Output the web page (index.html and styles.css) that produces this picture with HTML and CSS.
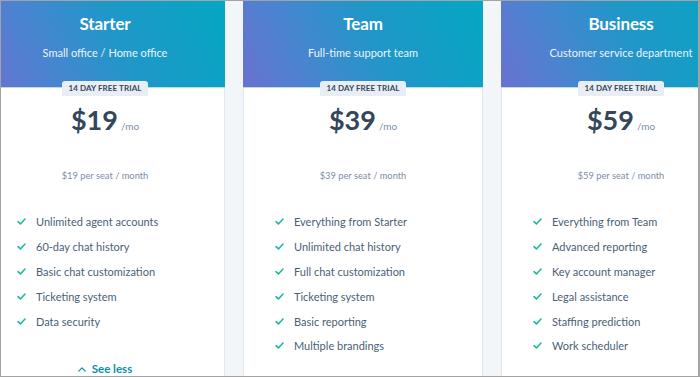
FILE: index.html
```html
<!DOCTYPE html>
<html lang="en">
<head>
<meta charset="utf-8">
<title>Pricing</title>
<link rel="stylesheet" href="styles.css">
</head>
<body>
<div class="frame">
  <div class="plans">
    <section class="plan">
      <header class="plan-head">
        <h2 class="plan-name">Starter</h2>
        <p class="plan-desc">Small office / Home office</p>
      </header>
      <div class="plan-body">
        <span class="badge">14 DAY FREE TRIAL</span>
        <div class="price"><span class="amount">$19</span><span class="per">/mo</span></div>
        <p class="seat">$19 per seat / month</p>
        <ul class="features">
          <li><svg class="check" viewBox="0 0 10 8"><polyline points="1,4.2 3.8,6.8 9,1.2"/></svg>Unlimited agent accounts</li>
          <li><svg class="check" viewBox="0 0 10 8"><polyline points="1,4.2 3.8,6.8 9,1.2"/></svg>60-day chat history</li>
          <li><svg class="check" viewBox="0 0 10 8"><polyline points="1,4.2 3.8,6.8 9,1.2"/></svg>Basic chat customization</li>
          <li><svg class="check" viewBox="0 0 10 8"><polyline points="1,4.2 3.8,6.8 9,1.2"/></svg>Ticketing system</li>
          <li><svg class="check" viewBox="0 0 10 8"><polyline points="1,4.2 3.8,6.8 9,1.2"/></svg>Data security</li>
        </ul>
        <a class="toggle" href="#"><svg class="caret" viewBox="0 0 10 6"><polyline points="1,5 5,1 9,5"/></svg>See less</a>
      </div>
    </section>
    <section class="plan">
      <header class="plan-head">
        <h2 class="plan-name">Team</h2>
        <p class="plan-desc">Full-time support team</p>
      </header>
      <div class="plan-body">
        <span class="badge">14 DAY FREE TRIAL</span>
        <div class="price"><span class="amount">$39</span><span class="per">/mo</span></div>
        <p class="seat">$39 per seat / month</p>
        <ul class="features">
          <li><svg class="check" viewBox="0 0 10 8"><polyline points="1,4.2 3.8,6.8 9,1.2"/></svg>Everything from Starter</li>
          <li><svg class="check" viewBox="0 0 10 8"><polyline points="1,4.2 3.8,6.8 9,1.2"/></svg>Unlimited chat history</li>
          <li><svg class="check" viewBox="0 0 10 8"><polyline points="1,4.2 3.8,6.8 9,1.2"/></svg>Full chat customization</li>
          <li><svg class="check" viewBox="0 0 10 8"><polyline points="1,4.2 3.8,6.8 9,1.2"/></svg>Ticketing system</li>
          <li><svg class="check" viewBox="0 0 10 8"><polyline points="1,4.2 3.8,6.8 9,1.2"/></svg>Basic reporting</li>
          <li><svg class="check" viewBox="0 0 10 8"><polyline points="1,4.2 3.8,6.8 9,1.2"/></svg>Multiple brandings</li>
        </ul>
      </div>
    </section>
    <section class="plan">
      <header class="plan-head">
        <h2 class="plan-name">Business</h2>
        <p class="plan-desc">Customer service department</p>
      </header>
      <div class="plan-body">
        <span class="badge">14 DAY FREE TRIAL</span>
        <div class="price"><span class="amount">$59</span><span class="per">/mo</span></div>
        <p class="seat">$59 per seat / month</p>
        <ul class="features">
          <li><svg class="check" viewBox="0 0 10 8"><polyline points="1,4.2 3.8,6.8 9,1.2"/></svg>Everything from Team</li>
          <li><svg class="check" viewBox="0 0 10 8"><polyline points="1,4.2 3.8,6.8 9,1.2"/></svg>Advanced reporting</li>
          <li><svg class="check" viewBox="0 0 10 8"><polyline points="1,4.2 3.8,6.8 9,1.2"/></svg>Key account manager</li>
          <li><svg class="check" viewBox="0 0 10 8"><polyline points="1,4.2 3.8,6.8 9,1.2"/></svg>Legal assistance</li>
          <li><svg class="check" viewBox="0 0 10 8"><polyline points="1,4.2 3.8,6.8 9,1.2"/></svg>Staffing prediction</li>
          <li><svg class="check" viewBox="0 0 10 8"><polyline points="1,4.2 3.8,6.8 9,1.2"/></svg>Work scheduler</li>
        </ul>
      </div>
    </section>
  </div>
</div>
</body>
</html>
```
FILE: styles.css
```css
html, body {
  margin: 0;
  padding: 0;
}
body {
  width: 700px;
  height: 377px;
  overflow: hidden;
  font-family: Lato, "Open Sans", "Liberation Sans", sans-serif;
  background: #ffffff;
}
.frame {
  box-sizing: border-box;
  width: 700px;
  height: 377px;
  border: 1px solid #a3a3a3;
  border-right-width: 2px;
  overflow: hidden;
  background: #f3f6f9;
}
.plans {
  display: flex;
  align-items: flex-start;
  gap: 18px;
  margin-left: -16px;
  height: 100%;
}
.plan {
  flex: 0 0 240px;
  width: 240px;
  height: 100%;
  display: flex;
  flex-direction: column;
  background: #ffffff;
}
.plan-head {
  flex: 0 0 auto;
  height: 87px;
  box-sizing: border-box;
  padding-top: 12px;
  text-align: center;
  color: #ffffff;
  background: linear-gradient(65deg, #6a72cf 0%, #4a84d0 25%, #2097c8 55%, #04a7c3 100%);
  border-bottom: 1px solid #b9dbe8;
}
.plan-name {
  margin: 0;
  font-size: 17px;
  line-height: 22px;
  font-weight: 700;
  letter-spacing: -0.1px;
}
.plan-desc {
  margin: 10px 0 0;
  font-size: 11px;
  line-height: 16px;
  font-weight: 400;
  color: #eaf5fb;
}
.plan-body {
  flex: 1 0 auto;
  display: flex;
  flex-direction: column;
  align-items: center;
  border-left: 1px solid #e3e8ee;
  border-right: 1px solid #e3e8ee;
}
.badge {
  margin-top: -7px;
  height: 15px;
  padding: 0 6px;
  box-sizing: border-box;
  background: #e9eef4;
  border-radius: 3px 3px 0 0;
  color: #33475b;
  font-size: 8px;
  line-height: 15px;
  font-weight: 700;
  letter-spacing: 0.1px;
}
.price {
  margin-top: 9px;
  line-height: 30px;
  color: #33475b;
  display: flex;
  align-items: baseline;
  gap: 3px;
}
.amount {
  font-size: 27px;
  font-weight: 700;
}
.per {
  font-size: 10px;
  color: #7c8ea3;
}
.seat {
  margin: 28px 0 0;
  font-size: 9.3px;
  line-height: 14px;
  color: #7c8ea3;
}
.features {
  align-self: stretch;
  list-style: none;
  margin: 26.5px 0 0;
  padding: 0 0 0 31px;
}
.features li {
  display: flex;
  align-items: center;
  height: 24.8px;
  font-size: 11px;
  color: #4a5f75;
}
.check {
  width: 9px;
  height: 7px;
  margin-right: 10px;
  fill: none;
  stroke: #1db7a0;
  stroke-width: 1.8;
  stroke-linecap: round;
  stroke-linejoin: round;
}
.toggle {
  margin-top: 28px;
  display: flex;
  align-items: center;
  gap: 6px;
  color: #0a91ad;
  font-size: 11.5px;
  line-height: 16px;
  font-weight: 700;
  text-decoration: none;
}
.caret {
  width: 8px;
  height: 5px;
  fill: none;
  stroke: #0a91ad;
  stroke-width: 1.6;
  stroke-linecap: round;
  stroke-linejoin: round;
}
```
